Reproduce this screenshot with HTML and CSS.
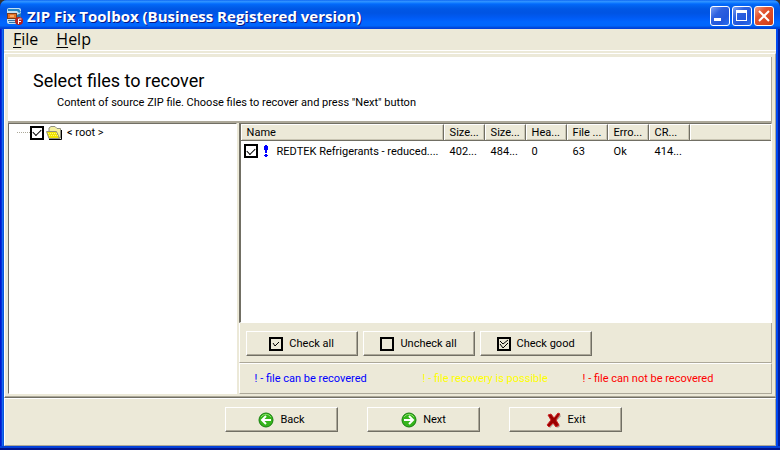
FILE: index.html
```html
<!DOCTYPE html>
<html lang="en">
<head>
<meta charset="utf-8">
<title>ZIP Fix Toolbox</title>
<link rel="stylesheet" href="styles.css">
</head>
<body>
<div class="window">
  <header class="titlebar">
    <svg class="app-icon" viewBox="0 0 16 17" aria-hidden="true">
      <rect x="0" y="0" width="14" height="16" rx="2" fill="#c4e0f2"/>
      <path d="M1 1h11l2 3-2 1-2-2H1z" fill="#2786c4"/>
      <path d="M1 12h8v1H1zM2 14h7v1H2z" fill="#3374a8"/>
      <path d="M0 5h10v6H0z" fill="#7a3b1c"/>
      <path d="M1 6h8v4H1z" fill="#e87424"/>
      <path d="M3 8h4" stroke="#ffe0b0" stroke-width="1"/>
      <path d="M10 7l4-2v4l-4 3z" fill="#2479b5"/>
      <circle cx="12" cy="13" r="4" fill="#b8201c"/>
      <path d="M11.500 16v-5h3M11.500 13.500h2.500" fill="none" stroke="#fff" stroke-width="1"/>
    </svg>
    <h1 class="caption">ZIP Fix Toolbox (Business Registered version)</h1>
    <div class="controls">
      <button class="control" type="button" aria-label="Minimize"><svg viewBox="0 0 18 18"><path d="M3 11h7v3H3z" fill="#fff"/></svg></button>
      <button class="control" type="button" aria-label="Maximize"><svg viewBox="0 0 18 18"><path d="M3 3h11v11H3zM4 6v7h9V6z" fill="#fff" fill-rule="evenodd"/></svg></button>
      <button class="control close" type="button" aria-label="Close"><svg viewBox="0 0 18 18"><path d="M4 4l10 10M14 4L4 14" stroke="#fff" stroke-width="2"/></svg></button>
    </div>
  </header>
  <nav class="menu">
    <button class="menu-item" type="button"><u>F</u>ile</button>
    <button class="menu-item" type="button"><u>H</u>elp</button>
  </nav>
  <main class="page">
    <section class="intro">
      <h2 class="heading">Select files to recover</h2>
      <p class="hint">Content of source ZIP file. Choose files to recover and press "Next" button</p>
    </section>
    <div class="panes">
      <section class="tree">
        <label class="node">
          <span class="branch"></span>
          <input class="tick" type="checkbox" checked>
          <svg class="folder" viewBox="0 0 16 14" aria-hidden="true">
            <path d="M3 5V2l2-1.500h4l2 2h3.500V12H3z" fill="#f4f0a0" stroke="#909080"/>
            <path d="M15.500 4v9.500H3" fill="none" stroke="#000"/>
            <path d="M.5 5.500h10l3 7H3z" fill="#f2e600" stroke="#909080"/>
            <path d="M2 7.500h9M3 9.500h9" stroke="#fff870" stroke-dasharray="1 1"/>
          </svg>
          <span>&lt; root &gt;</span>
        </label>
      </section>
      <section class="files">
        <div class="list">
          <table class="table">
            <colgroup><col class="col-name"><col class="col"><col class="col"><col class="col"><col class="col"><col class="col"><col class="col"><col></colgroup>
            <thead>
              <tr><th>Name</th><th>Size...</th><th>Size...</th><th>Hea...</th><th>File ...</th><th>Erro...</th><th>CR...</th><th class="rest"></th></tr>
            </thead>
            <tbody>
              <tr>
                <td class="name-cell"><label class="file"><input class="tick" type="checkbox" checked><svg class="mark" viewBox="0 0 4 12" aria-hidden="true"><path d="M1 0h2v1h1v4H3v3H1V5H0V1h1zM1 9h2v1h1v1H3v1H1v-1H0v-1h1z" fill="#00f"/></svg><span>REDTEK Refrigerants - reduced....</span></label></td>
                <td>402...</td><td>484...</td><td>0</td><td>63</td><td>Ok</td><td>414...</td><td></td>
              </tr>
            </tbody>
          </table>
        </div>
        <div class="checks">
          <button class="button" type="button"><svg class="box" viewBox="0 0 14 14"><path d="M1 1h12v12H1z" fill="none" stroke="#000" stroke-width="2"/><path d="M4 6l2 3 4-4" fill="none" stroke="#000"/></svg>Check all</button>
          <button class="button" type="button"><svg class="box" viewBox="0 0 14 14"><path d="M1 1h12v12H1z" fill="none" stroke="#000" stroke-width="2"/></svg>Uncheck all</button>
          <button class="button" type="button"><svg class="box" viewBox="0 0 14 14"><path d="M1 1h12v12H1z" fill="none" stroke="#000" stroke-width="2"/><path d="M3 4l3 3 5-4M3 7l3 4 5-5" fill="none" stroke="#000"/></svg>Check good</button>
        </div>
        <div class="legend">
          <span class="good">! - file can be recovered</span>
          <span class="maybe">! - file recovery is possible</span>
          <span class="bad">! - file can not be recovered</span>
        </div>
      </section>
    </div>
  </main>
  <footer class="footer">
    <button class="button" type="button"><svg class="arrow" viewBox="0 0 16 16"><circle cx="8" cy="8" r="7" fill="#35b51b" stroke="#16800e"/><path d="M3 5a6 6 0 0 1 10 0" fill="none" stroke="#8be06a"/><path d="M13 8H5M8 4L4 8l4 4" fill="none" stroke="#fff" stroke-width="2"/></svg>Back</button>
    <button class="button" type="button"><svg class="arrow" viewBox="0 0 16 16"><circle cx="8" cy="8" r="7" fill="#35b51b" stroke="#16800e"/><path d="M3 5a6 6 0 0 1 10 0" fill="none" stroke="#8be06a"/><path d="M3 8h8M8 4l4 4-4 4" fill="none" stroke="#fff" stroke-width="2"/></svg>Next</button>
    <button class="button" type="button"><svg class="arrow" viewBox="0 0 16 16"><path d="M4 4l9 11M14 3L3 15" stroke="#aaa69a" stroke-width="3"/><path d="M2 3l3-1 3 4 4-5 2 1-4 6 3 5-3 2-3-4-4 4-2-2 4-5z" fill="#900" stroke="#c22" stroke-width="1"/></svg>Exit</button>
  </footer>
</div>
</body>
</html>
```
FILE: styles.css
```css
* { box-sizing: border-box; }

body {
  margin: 0;
  background: #333;
  color: #000;
  font: 11px/15px Roboto, "Liberation Sans", Arial, sans-serif;
}

button { font: inherit; color: inherit; }
h1, h2, p { margin: 0; font-weight: normal; }

.window {
  display: flex;
  flex-direction: column;
  min-height: 100vh;
  padding: 0 4px 4px;
  border-radius: 7px 7px 0 0;
  background: linear-gradient(90deg, #0019cf 0 1px, #0831d9 1px 2px, #166aee 2px 3px, #0855dd 3px calc(100% - 4px), #0048f1 calc(100% - 4px) calc(100% - 2px), #001ea0 calc(100% - 2px));
  box-shadow: inset 0 -2px #00138c, inset 0 -4px #0441d8;
}

.titlebar {
  display: flex;
  align-items: center;
  height: 29px;
  margin: 0 -4px;
  padding: 3px 6px 0 7px;
  border-radius: 7px 7px 0 0;
  background: linear-gradient(#0058ee 0, #3593ff 1px, #288eff 2px, #127dff 3px, #0369fc 4px, #0262ee 6px, #0057e5 9px, #0054e3 13px, #005bf5 18px, #0066ff 22px, #0066fc 26px, #0050e0 27px, #003dd7 29px);
}

.app-icon { width: 16px; height: 17px; }

.caption {
  flex: 1;
  padding-left: 4px;
  color: #fff;
  font: bold 15px/20px "Open Sans", "Noto Sans", sans-serif;
  text-shadow: 1px 1px #0a1883;
  white-space: nowrap;
}

.controls { display: flex; gap: 2px; }

.control {
  width: 20px;
  height: 20px;
  padding: 0;
  border: 1px solid #fff;
  border-radius: 3px;
  background: linear-gradient(135deg, #7aa0f5, #2f62df 35%, #2257dc 70%, #2b70f0);
}

.control svg { display: block; }
.close { background: linear-gradient(135deg, #f0a088, #e25430 35%, #da4520 75%, #c83c12); }

.menu {
  display: flex;
  gap: 8px;
  height: 24px;
  padding: 0 4px;
  background: linear-gradient(#ece9d8 21px, #fff 21px 22px, #ece9d8 22px);
}

.menu-item {
  height: 21px;
  padding: 0 5px;
  border: 0;
  background: none;
  font: 16px/21px "Open Sans", "Noto Sans", sans-serif;
}

.menu-item u { text-underline-offset: 2px; text-decoration-thickness: 1px; }

.page {
  flex: 1;
  display: flex;
  flex-direction: column;
  padding: 3px;
  border: 1px solid;
  border-color: #fff #aca899 #716f64 #fff;
  background: #ece9d8;
  box-shadow: inset 0 -1px #aca899;
}

.intro {
  height: 66px;
  padding: 14px 25px 0;
  border-right: 1px solid #aca899;
  border-bottom: 2px solid #aca899;
  background: #fff;
}

.heading { font-size: 18px; line-height: 19px; }
.hint { padding: 5px 24px 0; }

.panes {
  flex: 1;
  display: grid;
  grid-template-columns: minmax(180px, 3fr) 7fr;
  gap: 2px;
}

.tree {
  padding: 1px 8px;
  border: 1px solid;
  border-color: #716f64 #fff #fff #716f64;
  background: #fff;
}

.node, .file { display: flex; align-items: center; white-space: nowrap; }
.branch { width: 13px; border-top: 1px dotted #aca899; }

.tick {
  appearance: none;
  display: grid;
  flex: none;
  place-items: center;
  width: 14px;
  height: 14px;
  margin: 0;
  border: 2px solid #000;
  background: #fff;
}

.tick:checked::before {
  content: "";
  width: 7px;
  height: 4px;
  margin-bottom: 2px;
  border: solid #000;
  border-width: 0 0 1px 1px;
  transform: rotate(-45deg);
}

.folder { width: 16px; height: 14px; margin: 0 5px 0 2px; }

.files { display: flex; flex-direction: column; }

.list {
  flex: 1;
  border: 1px solid;
  border-color: #716f64 #fff #fff #716f64;
  border-left-width: 2px;
  background: #fff;
}

.table { width: 100%; border-collapse: separate; border-spacing: 0; table-layout: fixed; }
.col-name { width: 203px; }
.col { width: 41px; }

th, td {
  padding: 0 0 0 6px;
  font-weight: normal;
  text-align: left;
  white-space: nowrap;
}

th {
  height: 17px;
  border: solid;
  border-width: 1px 1px 1px 0;
  border-color: #fff #716f64 #716f64;
  background: #ece9d8;
  box-shadow: inset 1px 0 #fff, inset -1px -1px #c8c4b2;
}

.rest { border-right: 0; }
td { height: 20px; }
.name-cell { padding-left: 3px; }
.mark { flex: none; width: 4px; height: 12px; margin: 0 9px 0 6px; }

.checks {
  display: flex;
  gap: 5px;
  padding: 8px 6px 6px;
  border: 1px solid;
  border-color: #fff #aca899 #aca899 #fff;
  border-top: 0;
}

.button {
  display: flex;
  align-items: center;
  justify-content: center;
  gap: 6px;
  width: 112px;
  height: 25px;
  padding: 0;
  border: 1px solid;
  border-color: #fff #716f64 #716f64 #fff;
  background: #ece9d8;
  box-shadow: inset -1px -1px #aca899;
}

.box { width: 14px; height: 14px; }
.arrow { width: 16px; height: 16px; }

.legend {
  display: grid;
  grid-template-columns: 168px 160px 1fr;
  padding: 7px 15px;
  border: 1px solid;
  border-color: #fff #aca899 #aca899 #fff;
  white-space: nowrap;
}

.good { color: #00f; }
.maybe { color: #ff0; }
.bad { color: #f00; }

.footer {
  display: flex;
  justify-content: center;
  gap: 29px;
  padding: 8px 0 13px 67px;
  border: 1px solid;
  border-color: #fff #aca899 #aca899 #fff;
  background: #ece9d8;
}

.footer .button { width: 113px; }
```
